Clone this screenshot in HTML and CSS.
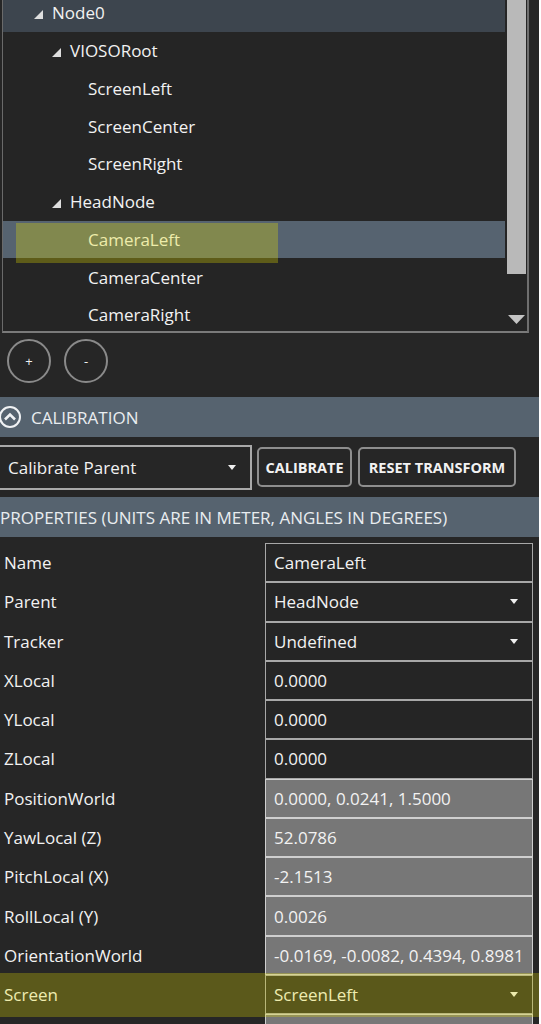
FILE: index.html
```html
<!DOCTYPE html>
<html>
<head>
<meta charset="utf-8">
<link rel="stylesheet" href="styles.css">
</head>
<body>
<div class="app">
  <div class="tree">
    <div class="tree-view">
      <ul class="tree-list">
        <li class="row lvl0 current"><span class="toggle"><svg viewBox="0 0 10 10"><polygon points="10,1 10,10 1,10"/></svg></span><span class="label">Node0</span></li>
        <li class="row lvl1"><span class="toggle"><svg viewBox="0 0 10 10"><polygon points="10,1 10,10 1,10"/></svg></span><span class="label">VIOSORoot</span></li>
        <li class="row lvl2"><span class="toggle"></span><span class="label">ScreenLeft</span></li>
        <li class="row lvl2"><span class="toggle"></span><span class="label">ScreenCenter</span></li>
        <li class="row lvl2"><span class="toggle"></span><span class="label">ScreenRight</span></li>
        <li class="row lvl1"><span class="toggle"><svg viewBox="0 0 10 10"><polygon points="10,1 10,10 1,10"/></svg></span><span class="label">HeadNode</span></li>
        <li class="row lvl2 selected"><span class="toggle"></span><span class="label">CameraLeft</span></li>
        <li class="row lvl2"><span class="toggle"></span><span class="label">CameraCenter</span></li>
        <li class="row lvl2"><span class="toggle"></span><span class="label">CameraRight</span></li>
      </ul>
    </div>
    <div class="scrollbar">
      <div class="thumb"></div>
      <svg class="sb-arrow" viewBox="0 0 19 9"><polygon points="1,0 18,0 9.5,9"/></svg>
    </div>
    <div class="mark mark-tree"></div>
  </div>

  <div class="tree-buttons">
    <button class="circle">+</button>
    <button class="circle">-</button>
  </div>

  <div class="section-header">
    <svg class="collapse-icon" viewBox="0 0 22 22"><circle cx="11" cy="11" r="10" fill="none" stroke="#f0f2f4" stroke-width="2"/><polyline points="6,13.5 11,8.5 16,13.5" fill="none" stroke="#f0f2f4" stroke-width="2.6"/></svg>
    <span>CALIBRATION</span>
  </div>

  <div class="calib-row">
    <div class="combo"><span>Calibrate Parent</span><svg class="dd" viewBox="0 0 8 5"><polygon points="0,0 8,0 4,5"/></svg></div>
    <button class="btn btn-cal">CALIBRATE</button>
    <button class="btn btn-reset">RESET TRANSFORM</button>
  </div>

  <div class="section-header props-header">
    <span class="props-title">PROPERTIES (UNITS ARE IN METER, ANGLES IN DEGREES)</span>
  </div>

  <div class="props">
    <div class="plabel">Name</div><div class="pval">CameraLeft</div>
    <div class="plabel">Parent</div><div class="pval"><span>HeadNode</span><svg class="dd" viewBox="0 0 8 5"><polygon points="0,0 8,0 4,5"/></svg></div>
    <div class="plabel">Tracker</div><div class="pval"><span>Undefined</span><svg class="dd" viewBox="0 0 8 5"><polygon points="0,0 8,0 4,5"/></svg></div>
    <div class="plabel">XLocal</div><div class="pval">0.0000</div>
    <div class="plabel">YLocal</div><div class="pval">0.0000</div>
    <div class="plabel">ZLocal</div><div class="pval">0.0000</div>
    <div class="plabel">PositionWorld</div><div class="pval ro">0.0000, 0.0241, 1.5000</div>
    <div class="plabel">YawLocal (Z)</div><div class="pval ro">52.0786</div>
    <div class="plabel">PitchLocal (X)</div><div class="pval ro">-2.1513</div>
    <div class="plabel">RollLocal (Y)</div><div class="pval ro">0.0026</div>
    <div class="plabel">OrientationWorld</div><div class="pval ro">-0.0169, -0.0082, 0.4394, 0.8981</div>
    <div class="plabel">Screen</div><div class="pval"><span>ScreenLeft</span><svg class="dd" viewBox="0 0 8 5"><polygon points="0,0 8,0 4,5"/></svg></div>
    <div class="plabel"></div><div class="pval ro"></div>
    <div class="mark mark-screen"></div>
  </div>
</div>
</body>
</html>
```

FILE: styles.css
```css
* { box-sizing: border-box; }
html, body { margin: 0; padding: 0; background: #ffffff; }
body {
  font-family: "Open Sans", "Noto Sans", sans-serif;
  font-size: 17px;
  color: #f2f2f2;
}
.app {
  width: 539px;
  height: 1024px;
  overflow: hidden;
  background: #262626;
}

/* tree */
.tree {
  position: relative;
  display: flex;
  margin-left: 2px;
  width: 527px;
  height: 333px;
  border-left: 1px solid #6a6a6a;
  border-right: 2px solid #6f6f6f;
  border-bottom: 2px solid #7a7a7a;
  background: #252525;
}
.tree-view { flex: 0 0 502px; overflow: hidden; }
.tree-list { list-style: none; margin: -6px 0 0 0; padding: 0; }
.row {
  height: 37.75px;
  display: flex;
  align-items: center;
  white-space: nowrap;
}
.row.current { background: #3d454e; }
.row.selected { background: #566370; }
.lvl0 { padding-left: 30px; }
.lvl1 { padding-left: 48px; }
.lvl2 { padding-left: 66px; }
.toggle { width: 10px; height: 10px; margin-right: 9px; margin-top: 3px; display: flex; }
.toggle svg { width: 10px; height: 10px; fill: #dedede; }
.label { line-height: 1; }

.scrollbar {
  flex: 0 0 22px;
  display: flex;
  flex-direction: column;
  align-items: center;
  padding: 0 1px 7px 2px;
}
.thumb { width: 19px; height: 274px; background: #b9b9b9; }
.sb-arrow { width: 19px; height: 9px; margin-top: auto; fill: #c4c4c4; }

.mark {
  position: absolute;
  background: rgba(230, 222, 0, 0.30);
  pointer-events: none;
}
.mark-tree { left: 13px; top: 223px; width: 262px; height: 40px; }

/* circle buttons */
.tree-buttons {
  display: flex;
  gap: 13px;
  height: 64px;
  padding: 6px 0 0 7px;
}
.circle {
  width: 44px;
  height: 44px;
  border-radius: 50%;
  border: 2px solid #8a8a8a;
  background: transparent;
  color: #f0f0f0;
  font-family: "Open Sans", sans-serif;
  font-size: 13px;
  padding: 0;
}

/* section headers */
.section-header {
  height: 40px;
  background: #56636f;
  display: flex;
  align-items: center;
  color: #e9edf0;
  white-space: nowrap;
}
.collapse-icon { width: 22px; height: 22px; margin-left: -1px; margin-right: 10px; }
.props-title { margin-left: 0; }

/* calibration row */
.calib-row {
  height: 60px;
  display: flex;
  align-items: center;
  gap: 5px;
}
.combo {
  margin-left: -2px;
  width: 254px;
  height: 45px;
  border: 2px solid #a9a9a9;
  display: flex;
  align-items: center;
  padding: 0 14px 0 8px;
  justify-content: space-between;
}
.dd { width: 8px; height: 5px; fill: #f0f0f0; }
.btn {
  height: 40px;
  border: 2px solid #8e8e8e;
  border-radius: 5px;
  background: transparent;
  color: #f2f2f2;
  font-family: "Open Sans", sans-serif;
  font-weight: 700;
  font-size: 14.5px;
  padding: 0;
  white-space: nowrap;
}
.btn-cal { width: 95px; }
.btn-reset { width: 158px; margin-left: 1px; }

/* properties */
.props {
  position: relative;
  display: grid;
  grid-template-columns: 265px 268px;
  grid-auto-rows: 39.27px;
  padding-top: 6px;
}
.plabel {
  display: flex;
  align-items: center;
  padding-left: 4px;
  white-space: nowrap;
}
.pval {
  display: flex;
  align-items: center;
  justify-content: space-between;
  padding: 0 14px 0 8px;
  border: 1px solid #a8a8a8;
  background: #252525;
  white-space: nowrap;
}
.pval.ro { background: #777777; border-color: #cfcfcf; }
.mark-screen { left: 0; right: -6px; top: 436px; height: 44px; background: rgba(230, 222, 0, 0.28); }
```
